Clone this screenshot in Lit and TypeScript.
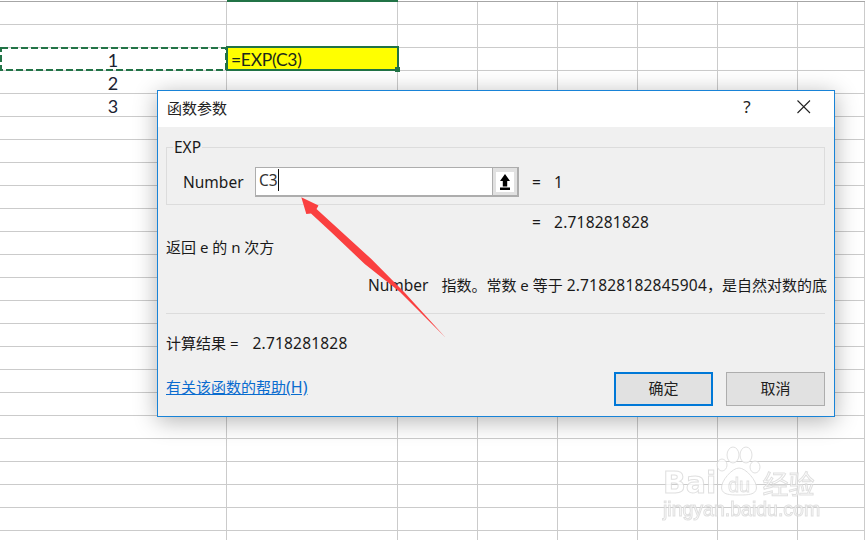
import { LitElement, html, css, svg } from 'lit';
import { customElement } from 'lit/decorators.js';

const COLS = [227, 171, 80, 80, 80, 80, 80, 67];
const ROW_COUNT = 24;

@customElement('app-root')
export class AppRoot extends LitElement {
  static styles = css`
    :host {
      display: block;
      position: relative;
      width: 865px;
      height: 540px;
      overflow: hidden;
      background: #fff;
      font-family: 'Noto Sans', 'Noto Sans CJK SC', sans-serif;
      color: #1a1a1a;
    }
    .topline {
      height: 2px;
      display: flex;
      background: linear-gradient(#fff 1px, #a6a6a6 1px);
    }
    .topline i {
      margin-left: 227px;
      width: 171px;
      background: #217346;
    }
    .sheet {
      display: grid;
      grid-template-columns: 227px 171px 80px 80px 80px 80px 80px 67px;
      grid-auto-rows: 23px;
    }
    .cell {
      box-sizing: border-box;
      border-right: 1px solid #cbcbcb;
      border-bottom: 1px solid #cbcbcb;
      font-family: 'Lato', 'Liberation Sans', sans-serif;
      font-size: 18px;
      line-height: 25px;
      text-align: center;
      color: #1b2233;
      white-space: nowrap;
    }
    .copied { position: absolute; left: 0; top: 47px; }
    .active {
      position: absolute;
      left: 226px;
      top: 46px;
      width: 173px;
      height: 25px;
      box-sizing: border-box;
      border: 2px solid #217346;
      background: #ffff00;
      font-family: 'Lato', 'Liberation Sans', sans-serif;
      font-size: 17.5px;
      letter-spacing: -0.3px;
      line-height: 24px;
      padding-left: 3px;
      color: #1c2a1c;
    }
    .active::after {
      content: '';
      position: absolute;
      right: -3px;
      bottom: -3px;
      width: 5px;
      height: 5px;
      background: #217346;
    }
    .dialog {
      position: absolute;
      left: 157px;
      top: 90px;
      width: 678px;
      height: 327px;
      box-sizing: border-box;
      border: 1px solid #1883d7;
      background: #f0f0f0;
      box-shadow: 0 4px 22px rgba(0, 0, 0, 0.3);
      display: flex;
      flex-direction: column;
      font-size: 15px;
    }
    .num { font-size: 15.5px; letter-spacing: 0.2px; }
    .title {
      height: 36px;
      flex: none;
      box-sizing: border-box;
      background: #fff;
      display: flex;
      align-items: center;
      padding: 0 0 4px 9px;
      color: #222;
    }
    .title span { flex: 1; }
    .help {
      width: 58px;
      margin-right: 20px;
      text-align: center;
      font-size: 17px;
      line-height: 20px;
    }
    .close { width: 16px; height: 16px; margin-right: 22px; }
    .body {
      flex: 1;
      display: flex;
      flex-direction: column;
      padding: 20px 9px 10px 8px;
    }
    .group {
      box-sizing: border-box;
      position: relative;
      height: 58px;
      border: 1px solid #dcdcdc;
      display: flex;
      align-items: center;
      padding: 11px 0 0 16px;
    }
    .legend {
      position: absolute;
      left: 6px;
      top: -11px;
      padding: 0 1px;
      background: #f0f0f0;
      line-height: 20px;
      font-size: 15.5px;
    }
    .arg-label { width: 72px; flex: none; line-height: 20px; font-size: 15.5px; }
    .ref {
      box-sizing: border-box;
      width: 264px;
      height: 30px;
      flex: none;
      display: flex;
      border: solid #adadad;
      border-width: 1px 2px 2px 1px;
      background: #fff;
    }
    .ref-text {
      flex: 1;
      padding-left: 3px;
      line-height: 25px;
      font-size: 15.5px;
      color: #333;
    }
    .caret {
      display: inline-block;
      width: 1px;
      height: 22px;
      background: #111;
      vertical-align: -5px;
    }
    .ref-btn {
      box-sizing: border-box;
      width: 25px;
      flex: none;
      background: #e1e1e1;
      border-left: 1px solid #adadad;
      padding: 4px 3px 3px;
    }
    .ref-face {
      height: 20px;
      background: #fff;
      display: flex;
      align-items: center;
      justify-content: center;
    }
    .ref-face svg { display: block; }
    .eq { margin-left: 13px; display: flex; gap: 13px; font-size: 15.5px; }
    .result {
      margin: 6px 0 0 366px;
      display: flex;
      gap: 13px;
      line-height: 22px;
    }
    .summary { margin-top: 3px; line-height: 22px; }
    .detail {
      margin-top: 16px;
      margin-right: -2px;
      text-align: right;
      line-height: 22px;
      white-space: nowrap;
    }
    .detail b { font-weight: 400; margin-right: 13px; font-size: 15.5px; }
    .rule { height: 1px; background: #dcdcdc; margin-top: 17px; }
    .calc { margin-top: 18px; line-height: 22px; display: flex; gap: 14px; }
    .foot { margin-top: auto; display: flex; align-items: center; }
    .foot a {
      flex: 1;
      color: #0a6ccf;
      text-decoration: underline;
      padding-bottom: 4px;
    }
    .foot a span { font-size: 16px; }
    .btn {
      box-sizing: border-box;
      width: 99px;
      height: 34px;
      padding-bottom: 3px;
      background: #e1e1e1;
      border: 1px solid #adadad;
      display: flex;
      align-items: center;
      justify-content: center;
      margin-left: 13px;
      color: #222;
    }
    .btn.primary { border: 2px solid #0078d7; }
    .arrow { position: absolute; left: 0; top: 0; pointer-events: none; }
    .mark {
      position: absolute;
      left: 663px;
      top: 446px;
      color: #fff;
      -webkit-text-stroke: 1px #d8d8d8;
      font-family: 'Liberation Sans', sans-serif;
      line-height: 1;
      opacity: 0.8;
      filter: blur(0.4px);
    }
    .mark-top {
      display: flex;
      align-items: flex-end;
      height: 52px;
    }
    .mark-top span {
      font-family: 'DejaVu Sans', sans-serif;
      font-size: 30px;
      font-weight: 700;
    }
    .mark-top em {
      font-style: normal;
      font-size: 26px;
      font-family: 'Noto Sans CJK SC', sans-serif;
      padding-bottom: 2px;
    }
    .mark-url { font-size: 19.5px; margin-top: 2px; }
    .paw { flex: none; }
  `;

  private renderCell(row: number, col: number) {
    const text = col === 0 && row >= 2 && row <= 4 ? String(row - 1) : '';
    return html`<div class="cell">${text}</div>`;
  }

  render() {
    const rows = Array.from({ length: ROW_COUNT }, (_, r) => r);
    return html`
      <div class="topline"><i></i></div>
      <div class="sheet">
        ${rows.map(r => COLS.map((_, c) => this.renderCell(r, c)))}
      </div>
      <svg class="copied" width="227" height="24" viewBox="0 0 227 24">
        <rect x="1" y="1" width="225" height="22" fill="none" stroke="#217346" stroke-width="2" stroke-dasharray="7 3" />
      </svg>
      <div class="active">=EXP(C3)</div>

      <div class="dialog">
        <div class="title">
          <span>函数参数</span>
          <div class="help">?</div>
          <svg class="close" viewBox="0 0 16 16">
            <path d="M1.5 1.5 14 14M14 1.5 1.5 14" stroke="#222" stroke-width="1.1" fill="none" />
          </svg>
        </div>
        <div class="body">
          <div class="group">
            <div class="legend">EXP</div>
            <div class="arg-label">Number</div>
            <div class="ref">
              <div class="ref-text">C3<i class="caret"></i></div>
              <div class="ref-btn">
                <div class="ref-face">
                  <svg width="10" height="16" viewBox="0 0 10 16">
                    <path d="M5 0 10 7H7.2V12.5H2.8V7H0zM0 13.5H10V16H0z" fill="#000" />
                  </svg>
                </div>
              </div>
            </div>
            <div class="eq"><span>=</span><span>1</span></div>
          </div>
          <div class="result"><span class="num">=</span><span class="num">2.718281828</span></div>
          <div class="summary">返回 e 的 n 次方</div>
          <div class="detail"><b>Number</b>指数。常数 e 等于 <span class="num">2.71828182845904</span>，是自然对数的底</div>
          <div class="rule"></div>
          <div class="calc"><span>计算结果 =</span><span class="num">2.718281828</span></div>
          <div class="foot">
            <a>有关该函数的帮助<span>(H)</span></a>
            <div class="btn primary">确定</div>
            <div class="btn">取消</div>
          </div>
        </div>
      </div>

      <svg class="arrow" width="865" height="540" viewBox="0 0 865 540">
        <path d="M301.3 197.3 318.5 205.5 316.5 209 371.3 259 405 293 445.7 337.7 400 292 364.7 264 331.3 232.3 311 213.5 306.3 214Z" fill="#fa4040" />
      </svg>

      <div class="mark">
        <div class="mark-top">
          <span>Bai</span>
          <svg class="paw" width="46" height="52" viewBox="0 0 46 52">
            ${svg`<g fill="#fff" stroke="#d8d8d8" stroke-width="1">
              <ellipse cx="6" cy="19" rx="5" ry="6" />
              <ellipse cx="17" cy="9" rx="6" ry="8" />
              <ellipse cx="30" cy="9" rx="6" ry="8" />
              <ellipse cx="39" cy="21" rx="5" ry="6" />
              <path d="M23 22c7 0 18 13 17.5 20-.5 7-9 7-17.5 7s-17 0-17.5-7C5 35 16 22 23 22z" />
              <text x="23" y="46" text-anchor="middle" font-size="20" stroke-width="0.8">du</text>
            </g>`}
          </svg>
          <em>经验</em>
        </div>
        <div class="mark-url">jingyan.baidu.com</div>
      </div>
    `;
  }
}
